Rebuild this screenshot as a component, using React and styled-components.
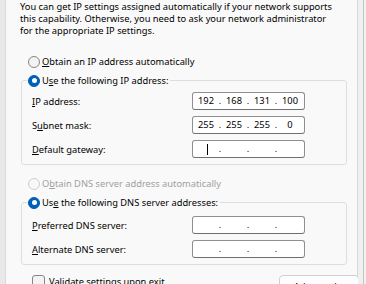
import React from 'react';
import styled, { createGlobalStyle } from 'styled-components';

const GlobalStyle = createGlobalStyle`
  html, body {
    margin: 0;
    padding: 0;
    background: #f0f0f0;
  }
  body {
    font-family: "Noto Sans", "Open Sans", sans-serif;
    font-size: 9.3px;
    color: #000;
  }
`;

//=============================================================================
// Frame
//=============================================================================

const Frame = styled.div`
  width: 366px;
  height: 284px;
  overflow: hidden;
  display: flex;
  background: #f0f0f0;
`;

const LeftEdge = styled.div`
  width: 5px;
  flex: none;
  background: #e9e9e9;
`;

const RightEdge = styled.div`
  width: 5px;
  flex: none;
  background: #f0f0f0;
  border-right: 1px solid #c4c4c4;
  margin-right: 2px;
`;

const Page = styled.div`
  width: 353px;
  flex: none;
  background: #f9f9f9;
  border-left: 1px solid #dadada;
  border-right: 1px solid #dadada;
  padding: 1px 0 0 14px;
  box-sizing: border-box;
`;

const Intro = styled.p`
  margin: 0;
  line-height: 12px;
  white-space: nowrap;
`;

//=============================================================================
// Radios
//=============================================================================

const RadioRow = styled.label`
  display: flex;
  align-items: center;
  gap: 2px;
  height: 13px;
  line-height: 13px;
  margin-left: ${p => p.$indent || 0}px;
  margin-top: ${p => p.$top || 0}px;
  color: ${p => (p.$disabled ? '#a0a0a0' : '#000')};
  white-space: nowrap;
`;

const Dot = styled.span`
  width: 12px;
  height: 12px;
  flex: none;
  border-radius: 50%;
  box-sizing: border-box;
  background: ${p => (p.$checked ? '#005fb8' : p.$disabled ? '#f7f7f7' : '#f3f3f3')};
  border: 1px solid ${p => (p.$checked ? '#005fb8' : p.$disabled ? '#cfcfcf' : '#858585')};
  display: flex;
  align-items: center;
  justify-content: center;

  &::after {
    content: '';
    display: ${p => (p.$checked ? 'block' : 'none')};
    width: 5px;
    height: 5px;
    border-radius: 50%;
    background: #fff;
  }
`;

const Key = styled.span`
  text-decoration: underline;
  text-underline-offset: 1px;
`;

const Radio = ({ checked, disabled, indent, top, children }) => (
  <RadioRow $indent={indent} $top={top} $disabled={disabled}>
    <Dot $checked={checked} $disabled={disabled} />
    <span>{children}</span>
  </RadioRow>
);

//=============================================================================
// Group boxes
//=============================================================================

const Group = styled.fieldset`
  margin: ${p => p.$top || 0}px 0 0 1px;
  width: 326px;
  box-sizing: border-box;
  border: 1px solid #dedede;
  border-radius: 3px;
  padding: ${p => p.$pad || 5}px 0 6px 10px;
  min-inline-size: 0;
`;

const Legend = styled.legend`
  padding: 0 2px 0 0;
  margin-left: -4px;
`;

const Rows = styled.div`
  display: grid;
  grid-template-columns: 160px 113px;
  row-gap: 6px;
  align-items: center;
`;

const FieldLabel = styled.span`
  white-space: nowrap;
`;

const IpBox = styled.div`
  height: 18px;
  box-sizing: border-box;
  background: #fff;
  border: 1px solid #8f8f8f;
  border-bottom-color: #6f6f6f;
  border-radius: 3px;
  padding-left: 3px;
  display: grid;
  grid-template-columns: 20px 8px 20px 8px 20px 8px 20px;
  align-items: center;
  line-height: 16px;
`;

const Octet = styled.span`
  text-align: center;
  position: relative;
  height: 16px;
`;

const Sep = styled.span`
  text-align: center;
`;

const Caret = styled.span`
  position: absolute;
  left: 11px;
  top: 3px;
  width: 1px;
  height: 11px;
  background: #000;
`;

const IpField = ({ value, caret }) => {
  const parts = value ? value.split('.') : ['', '', '', ''];
  return (
    <IpBox>
      {parts.map((p, i) => (
        <React.Fragment key={i}>
          {i > 0 && <Sep>.</Sep>}
          <Octet>
            {p}
            {caret && i === 0 && <Caret />}
          </Octet>
        </React.Fragment>
      ))}
    </IpBox>
  );
};

//=============================================================================
// Bottom row
//=============================================================================

const Bottom = styled.div`
  display: flex;
  align-items: flex-start;
  justify-content: space-between;
  margin-top: 10px;
  padding-left: 12px;
  width: 326px;
`;

const Check = styled.label`
  display: flex;
  align-items: center;
  gap: 4px;
  white-space: nowrap;
`;

const Box = styled.span`
  width: 13px;
  height: 13px;
  box-sizing: border-box;
  border: 1px solid #858585;
  border-radius: 3px;
  background: #f3f3f3;
`;

const Button = styled.button`
  width: 80px;
  height: 22px;
  font: inherit;
  background: #fdfdfd;
  border: 1px solid #d0d0d0;
  border-radius: 4px;
  margin-right: -1px;
`;

export default function App() {
  return (
    <>
      <GlobalStyle />
      <Frame>
        <LeftEdge />
        <Page>
          <Intro>
            You can get IP settings assigned automatically if your network supports<br />
            this capability. Otherwise, you need to ask your network administrator<br />
            for the appropriate IP settings.
          </Intro>

          <Radio indent={8} top={18}>
            <Key>O</Key>btain an IP address automatically
          </Radio>

          <Group $top={6}>
            <Legend>
              <Radio checked>
                U<Key>s</Key>e the following IP address:
              </Radio>
            </Legend>
            <Rows>
              <FieldLabel><Key>I</Key>P address:</FieldLabel>
              <IpField value="192.168.131.100" />
              <FieldLabel>S<Key>u</Key>bnet mask:</FieldLabel>
              <IpField value="255.255.255.0" />
              <FieldLabel><Key>D</Key>efault gateway:</FieldLabel>
              <IpField caret />
            </Rows>
          </Group>

          <Radio indent={8} top={12} disabled>
            O<Key>b</Key>tain DNS server address automatically
          </Radio>

          <Group $top={6} $pad={7}>
            <Legend>
              <Radio checked>
                Us<Key>e</Key> the following DNS server addresses:
              </Radio>
            </Legend>
            <Rows>
              <FieldLabel><Key>P</Key>referred DNS server:</FieldLabel>
              <IpField />
              <FieldLabel><Key>A</Key>lternate DNS server:</FieldLabel>
              <IpField />
            </Rows>
          </Group>

          <Bottom>
            <Check>
              <Box />
              <span>Va<Key>l</Key>idate settings upon exit</span>
            </Check>
            <Button>Ad<Key>v</Key>anced...</Button>
          </Bottom>
        </Page>
        <RightEdge />
      </Frame>
    </>
  );
}
